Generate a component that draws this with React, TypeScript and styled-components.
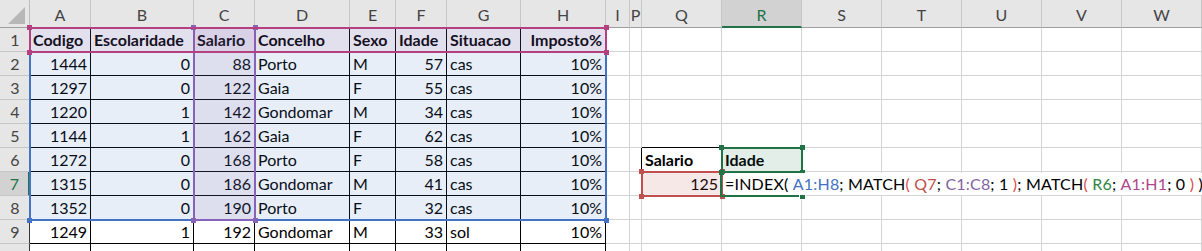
import React from 'react';
import styled, { createGlobalStyle } from 'styled-components';

const GREEN = '#217346';

const GlobalStyle = createGlobalStyle`
    html, body {
        margin: 0;
        padding: 0;
        background: #fff;
        overflow: hidden;
    }
    body {
        font-family: Lato, 'Liberation Sans', sans-serif;
        font-size: 16px;
        color: #000;
    }
`;

type Col = { key: string; w: number };

const COLS: Col[] = [
    { key: 'A', w: 61 },
    { key: 'B', w: 103 },
    { key: 'C', w: 61 },
    { key: 'D', w: 95 },
    { key: 'E', w: 46 },
    { key: 'F', w: 51 },
    { key: 'G', w: 74 },
    { key: 'H', w: 85 },
    { key: 'I', w: 24 },
    { key: 'P', w: 12 },
    { key: 'Q', w: 80 },
    { key: 'R', w: 80 },
    { key: 'S', w: 80 },
    { key: 'T', w: 80 },
    { key: 'U', w: 80 },
    { key: 'V', w: 80 },
    { key: 'W', w: 80 },
];

const TEMPLATE = `30px ${COLS.map((c) => `${c.w}px`).join(' ')}`;

const TABLE: (string | number)[][] = [
    ['Codigo', 'Escolaridade', 'Salario', 'Concelho', 'Sexo', 'Idade', 'Situacao', 'Imposto%'],
    [1444, 0, 88, 'Porto', 'M', 57, 'cas', '10%'],
    [1297, 0, 122, 'Gaia', 'F', 55, 'cas', '10%'],
    [1220, 1, 142, 'Gondomar', 'M', 34, 'cas', '10%'],
    [1144, 1, 162, 'Gaia', 'F', 62, 'cas', '10%'],
    [1272, 0, 168, 'Porto', 'F', 58, 'cas', '10%'],
    [1315, 0, 186, 'Gondomar', 'M', 41, 'cas', '10%'],
    [1352, 0, 190, 'Porto', 'F', 32, 'cas', '10%'],
    [1249, 1, 192, 'Gondomar', 'M', 33, 'sol', '10%'],
    [1210, 1, 196, 'Matosinhos', 'M', 47, 'cas', '10%'],
];

const PAREN = '#dd4b4f';

const FORMULA: [string, string][] = [
    ['=INDEX( ', '#000'],
    ['A1:H8', '#4472c4'],
    ['; MATCH', '#000'],
    ['(', PAREN],
    [' Q7', '#c0504d'],
    ['; ', '#000'],
    ['C1:C8', '#8064a2'],
    ['; 1 ', '#000'],
    [')', PAREN],
    ['; MATCH', '#000'],
    ['(', PAREN],
    [' R6', '#2e8540'],
    ['; ', '#000'],
    ['A1:H1', '#b0468a'],
    ['; 0 ', '#000'],
    [')', PAREN],
    [' )', '#000'],
];

type RangeDef = { col: string; row: string; color: string; fill: string };

// formula reference highlights, in grid line numbers
const RANGES: RangeDef[] = [
    { col: '2 / 10', row: '2 / 10', color: '#4472c4', fill: 'rgba(68, 114, 196, 0.12)' },
    { col: '4 / 5', row: '2 / 10', color: '#8662b8', fill: 'rgba(128, 100, 162, 0.1)' },
    { col: '2 / 10', row: '2 / 3', color: '#b4407f', fill: 'rgba(180, 64, 130, 0.08)' },
    { col: '12 / 13', row: '8 / 9', color: '#c0504d', fill: 'rgba(192, 80, 77, 0.13)' },
    { col: '13 / 14', row: '7 / 8', color: GREEN, fill: 'rgba(33, 115, 70, 0.12)' },
];

const isNumeric = (v: string | number) =>
    typeof v === 'number' || /%$/.test(String(v));

const App: React.FC = () => {
    const rows = Array.from({ length: 10 }, (_, i) => i + 1);

    const renderCell = (r: number, c: number) => {
        const col = COLS[c];
        const inTable = c < 8;
        let content: React.ReactNode = null;
        let right = false;
        let bold = false;
        let rightEdge = inTable ? '#000' : '#d4d4d4';
        let bottomEdge = inTable ? '#000' : '#d4d4d4';

        if (inTable) {
            const v = TABLE[r - 1][c];
            content = v;
            right = isNumeric(v);
            bold = r === 1;
        }
        if (col.key === 'Q' && r === 5) bottomEdge = '#000';
        if (col.key === 'P' && r === 6) rightEdge = '#000';
        if (col.key === 'Q' && r === 6) {
            content = 'Salario';
            bold = true;
        }
        if (col.key === 'R' && r === 6) {
            content = 'Idade';
            bold = true;
        }
        if (col.key === 'Q' && r === 7) {
            content = 125;
            right = true;
        }
        if (col.key === 'R' && r === 7) {
            content = (
                <Editor>
                    {FORMULA.map(([text, color], i) => (
                        <Token key={i} $color={color}>
                            {text}
                        </Token>
                    ))}
                    <Caret />
                </Editor>
            );
        }

        return (
            <Cell
                key={`${col.key}${r}`}
                $right={right}
                $bold={bold}
                $rightEdge={rightEdge}
                $bottomEdge={bottomEdge}
            >
                {content}
            </Cell>
        );
    };

    return (
        <>
            <GlobalStyle />
            <Stack>
                <Sheet>
                    <Corner>
                        <svg width="17" height="17" viewBox="0 0 17 17">
                            <polygon points="17,0 17,17 0,17" fill="#b7b7b7" />
                        </svg>
                    </Corner>
                    {COLS.map((c) => (
                        <ColHeader key={c.key} $active={c.key === 'R'}>
                            {c.key}
                        </ColHeader>
                    ))}
                    {rows.map((r) => (
                        <React.Fragment key={r}>
                            <RowHeader $active={r === 7}>{r}</RowHeader>
                            {COLS.map((_, c) => renderCell(r, c))}
                        </React.Fragment>
                    ))}
                </Sheet>

                <Overlay>
                    {RANGES.map((rg, i) => (
                        <RangeBox
                            key={i}
                            $col={rg.col}
                            $row={rg.row}
                            $color={rg.color}
                            $fill={rg.fill}
                        >
                            <Handle $color={rg.color} $v="top" $h="left" />
                            <Handle $color={rg.color} $v="top" $h="right" />
                            <Handle $color={rg.color} $v="bottom" $h="left" />
                            <Handle $color={rg.color} $v="bottom" $h="right" />
                        </RangeBox>
                    ))}
                    <ActiveCell>
                        <FillHandle />
                    </ActiveCell>
                </Overlay>
            </Stack>
        </>
    );
};

export default App;

const Stack = styled.div`
    display: grid;
    width: 1202px;

    & > * {
        grid-area: 1 / 1;
    }
`;

const Sheet = styled.div`
    display: grid;
    grid-template-columns: ${TEMPLATE};
    grid-template-rows: 28px repeat(10, 24px);
    background: #fff;
`;

const Overlay = styled.div`
    display: grid;
    grid-template-columns: ${TEMPLATE};
    grid-template-rows: 28px repeat(10, 24px);
    position: relative;
    z-index: 2;
    pointer-events: none;
`;

const HeaderBase = styled.div`
    box-sizing: border-box;
    background: #e6e6e6;
    color: #444;
    display: flex;
    align-items: center;
    justify-content: center;
    line-height: 18px;
    font-size: 16px;
`;

const Corner = styled(HeaderBase)`
    align-items: flex-end;
    justify-content: flex-end;
    padding: 0 4px 3px 0;
    border-right: 1px solid #bdbdbd;
    border-bottom: 1px solid #9f9f9f;
`;

const ColHeader = styled(HeaderBase)<{ $active: boolean }>`
    padding-top: 3px;
    border-right: 1px solid #c6c6c6;
    border-bottom: ${(p) => (p.$active ? `2px solid ${GREEN}` : '1px solid #9f9f9f')};
    background: ${(p) => (p.$active ? '#d2d2d2' : '#e6e6e6')};
    color: ${(p) => (p.$active ? GREEN : '#444')};
`;

const RowHeader = styled(HeaderBase)<{ $active: boolean }>`
    padding-left: 1px;
    border-bottom: 1px solid #c6c6c6;
    border-right: ${(p) => (p.$active ? `2px solid ${GREEN}` : '1px solid #333')};
    background: ${(p) => (p.$active ? '#d2d2d2' : '#e6e6e6')};
    color: ${(p) => (p.$active ? GREEN : '#444')};
`;

const Cell = styled.div<{
    $right: boolean;
    $bold: boolean;
    $rightEdge: string;
    $bottomEdge: string;
}>`
    box-sizing: border-box;
    display: flex;
    align-items: center;
    justify-content: ${(p) => (p.$right ? 'flex-end' : 'flex-start')};
    padding: 1px 3px 0;
    line-height: 18px;
    white-space: nowrap;
    font-weight: ${(p) => (p.$bold ? 700 : 400)};
    border-right: 1px solid ${(p) => p.$rightEdge};
    border-bottom: 1px solid ${(p) => p.$bottomEdge};
    min-width: 0;
`;

const Editor = styled.span`
    position: relative;
    z-index: 3;
    display: inline-flex;
    align-items: center;
    height: 22px;
    padding-right: 4px;
    background: #fff;
    white-space: pre;
    letter-spacing: 0.2px;
`;

const Token = styled.span<{ $color: string }>`
    color: ${(p) => p.$color};
`;

const Caret = styled.span`
    display: inline-block;
    width: 1px;
    height: 19px;
    margin-left: 4px;
    background: #000;
`;

const RangeBox = styled.div<{
    $col: string;
    $row: string;
    $color: string;
    $fill: string;
}>`
    grid-column: ${(p) => p.$col};
    grid-row: ${(p) => p.$row};
    position: relative;
    margin: -1px;
    border: 2px solid ${(p) => p.$color};
    background: ${(p) => p.$fill};
`;

const Handle = styled.span<{
    $color: string;
    $v: 'top' | 'bottom';
    $h: 'left' | 'right';
}>`
    position: absolute;
    width: 5px;
    height: 5px;
    background: ${(p) => p.$color};
    ${(p) => p.$v}: -4px;
    ${(p) => p.$h}: -4px;
`;

const ActiveCell = styled.div`
    grid-column: 13 / 14;
    grid-row: 8 / 9;
    position: relative;
    margin: -1px -1px -1px -2px;
    border: 2px solid ${GREEN};
`;

const FillHandle = styled.span`
    position: absolute;
    right: -5px;
    bottom: -5px;
    width: 5px;
    height: 5px;
    background: ${GREEN};
    border: 1px solid #fff;
`;
